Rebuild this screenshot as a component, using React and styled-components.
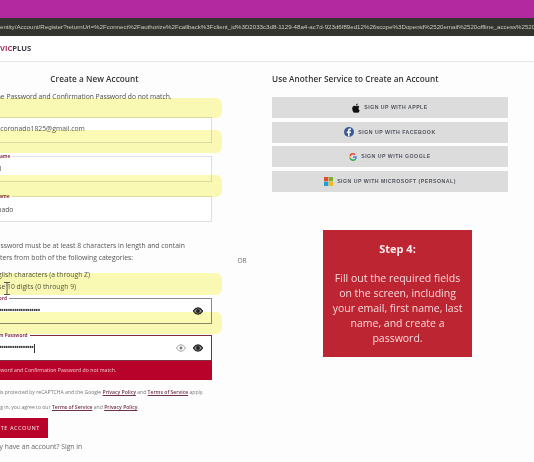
import React from 'react';
import styled, { createGlobalStyle } from 'styled-components';

const Global = createGlobalStyle`
  html, body { margin: 0; padding: 0; background: #fdfdfd; }
  body { width: 534px; height: 462px; overflow: hidden; font-family: "Open Sans", "Liberation Sans", sans-serif; }
`;
const Page = styled.div`
  width: 534px; height: 462px; overflow: hidden; position: relative; background: #fdfdfd;
  display: flex; flex-direction: column; filter: blur(0.45px);
`;
const TopBand = styled.div`height: 18px; background: #b32aa0; flex: none;`;
const UrlBar = styled.div`
  height: 18px; background: #33332f; flex: none; color: #c9cdbd; font-size: 6.15px; line-height: 18px;
  white-space: nowrap; overflow: hidden; font-family: "Liberation Sans", sans-serif;
`;
const Header = styled.div`
  height: 25px; flex: none; border-bottom: 1px solid #e6e6e6; background: #fff;
  font: 700 7.6px/25px "Open Sans", sans-serif; color: #3c3c44;
`;
const Vic = styled.span`color: #a8325e;`;
const Main = styled.div`
  flex: 1; display: flex; align-items: flex-start; margin-left: -29px; padding-top: 10px;
`;
const Left = styled.div`width: 241px; flex: none; display: flex; flex-direction: column; color: #444;`;
const Title = styled.h2`
  margin: 0; font: 600 8.2px/14px "Open Sans", sans-serif; color: #333; text-align: ${p => p.$align || 'center'};
  padding-left: ${p => p.$pad || 0}px; letter-spacing: .05px;
`;
const Alert = styled.div`font-size: 6.75px; line-height: 12px; margin-top: 5px; margin-left: 22px; color: #4c4c4c; white-space: nowrap;`;
const Field = styled.div`
  height: ${p => p.$h || 26}px; box-sizing: border-box; margin-top: ${p => p.$mt}px;
  border: 1px solid ${p => p.$bc || '#dfdfdf'}; background: #fff; position: relative;
  display: flex; align-items: center; padding: 0 8px ${p => p.$lift || 0}px 10px; gap: 7px;
  font-size: 6.8px; color: #555;
`;
const FieldLabel = styled.span`
  position: absolute; left: 10px; top: -4px; background: #fff; font-size: 4.8px; line-height: 6px; font-weight: 700; color: #8b3b50; padding: 0 2px; white-space: nowrap;
`;
const Value = styled.span`flex: 1; white-space: nowrap;`;
const Dots = styled.span`flex: 1; font-size: 6.5px; letter-spacing: -0.3px; color: #3a3a3a; white-space: nowrap; line-height: 10px; font-weight: 700;`;
const Caret = styled.span`display: inline-block; width: 1px; height: 9px; background: #333; margin-left: 1px; vertical-align: middle;`;
const Rules = styled.p`margin: ${p => p.$mt}px 0 0 ${p => p.$ml || 8}px; font-size: 6.8px; line-height: 11.5px; color: #555; white-space: nowrap;`;
const ErrorBar = styled.div`
  height: 19px; background: #b8022a; color: #f3c9cf; font-size: 5.2px; line-height: 19px; padding-left: 8px; white-space: nowrap;
`;
const Fine = styled.p`margin: ${p => p.$mt}px 0 0 8px; font-size: 5.1px; line-height: 8px; color: #777; white-space: nowrap;`;
const A = styled.a`color: #6d3243; text-decoration: underline; font-weight: 600;`;
const Submit = styled.div`
  margin: 7px 0 0 8px; width: 69px; height: 20px; background: #b8022a; color: #f1c8cf; text-align: right; box-sizing: border-box;
  font: 600 5.4px/20px "Open Sans", sans-serif; letter-spacing: .6px; padding-right: 8px; white-space: nowrap;
`;
const SignIn = styled.p`margin: 4px 0 0 8px; font-size: 6.8px; line-height: 10px; color: #666; white-space: nowrap;`;
const Or = styled.div`width: 60px; flex: none; text-align: center; font-size: 6.6px; color: #666; margin-top: 184px;`;
const Right = styled.div`width: 236px; flex: none; display: flex; flex-direction: column;`;
const Social = styled.div`
  height: 21px; margin-top: ${p => p.$mt || 3.67}px; background: #dcdcdc; display: flex; align-items: center; justify-content: center; gap: ${p => p.$gap || 4}px;
  font: 700 5.2px/21px "Liberation Sans", sans-serif; letter-spacing: .5px; color: #50545c; white-space: nowrap;
`;
const Card = styled.div`
  width: 149px; height: 127px; margin: 38px 0 0 51px; background: #bd2532; color: #f6d8da; box-sizing: border-box; text-align: center;
  font: 400 10.5px/15px "Open Sans", sans-serif; padding-top: 12px;
`;
const StepTitle = styled.div`font-weight: 700; font-size: 11px; line-height: 14px; margin-bottom: 15px; color: #fbeaea;`;
const Highlight = styled.div`
  position: absolute; left: -10px; width: 232px; top: ${p => p.$t}px; height: ${p => p.$h}px; background: #fbfbb6; mix-blend-mode: multiply; border-radius: 6px;
`;
const Cursor = styled.svg`position: absolute; left: 4px; top: 282px;`;

const Eye = ({ off, color = '#222' }) => (
  <svg width="10" height="8" viewBox="0 0 22 16" fill="none">
    <path d="M1 8c3-4.500 6.500-7 10-7s7 2.500 10 7c-3 4.500-6.500 7-10 7S4 12.500 1 8Z" stroke={color} strokeWidth={off ? 1.6 : 2.6} fill={off ? 'none' : '#999'} />
    <circle cx="11" cy="8" r={off ? 3.2 : 4.2} fill={color} />
  </svg>
);
const Apple = () => (
  <svg width="8" height="10" viewBox="0 0 16 20"><path fill="#111" d="M13 10.500c0-2 1.700-3 1.800-3.100C13.700 6 12 5.600 11.400 5.600 10 5.500 8.800 6.400 8.100 6.400S6.300 5.600 5.100 5.600C3.500 5.700 2 6.500 1.200 8c-1.600 2.900-.4 7.100 1.200 9.400.8 1.100 1.700 2.400 2.900 2.300 1.200 0 1.600-.7 3-.7s1.800.7 3 .7 2-1.100 2.800-2.300c.9-1.300 1.200-2.500 1.300-2.600-.1 0-2.400-.9-2.400-4.300ZM10.800 3.700C11.400 2.900 11.800 1.900 11.700.9c-.9 0-2 .6-2.600 1.300-.6.700-1.100 1.700-.9 2.700 1 .1 2-.5 2.600-1.200Z" /></svg>
);
const Facebook = () => (
  <svg width="10" height="10" viewBox="0 0 20 20"><circle cx="10" cy="10" r="10" fill="#3b5a9a" /><path fill="#fff" d="M11 19v-7h2.600l.4-3h-3V7.200c0-.9.300-1.400 1.500-1.400H14V3.200c-.3 0-1.200-.1-2.200-.1-2.200 0-3.800 1.300-3.800 3.800V9H5.500v3H8v7Z" /></svg>
);
const Google = () => (
  <svg width="8" height="8" viewBox="0 0 48 48">
    <path fill="#ea4335" d="M24 9.500c3.500 0 6.700 1.300 9.200 3.600l6.800-6.800C35.900 2.500 30.400 0 24 0 14.600 0 6.500 5.400 2.600 13.200l8 6.200C12.400 13.700 17.700 9.500 24 9.500Z" />
    <path fill="#4285f4" d="M47 24.500c0-1.600-.1-3.100-.4-4.500H24v9h12.900c-.6 3-2.200 5.500-4.700 7.200l7.300 5.700C43.800 37.900 47 31.800 47 24.500Z" />
    <path fill="#fbbc05" d="M10.600 28.600a14.500 14.500 0 0 1 0-9.200l-8-6.200a24 24 0 0 0 0 21.600Z" />
    <path fill="#34a853" d="M24 48c6.500 0 11.900-2.100 15.900-5.800l-7.300-5.700c-2.200 1.500-5 2.300-8.600 2.300-6.300 0-11.600-4.200-13.400-9.900l-8 6.200C6.500 42.600 14.600 48 24 48Z" />
  </svg>
);
const Microsoft = () => (
  <svg width="9" height="9" viewBox="0 0 20 20">
    <rect width="9.500" height="9.500" fill="#e2502a" /><rect x="10.500" width="9.500" height="9.500" fill="#7fb02a" />
    <rect y="10.500" width="9.500" height="9.500" fill="#1f9fd8" /><rect x="10.500" y="10.500" width="9.500" height="9.500" fill="#f5bb1d" />
  </svg>
);

export default function App() {
  return (
    <Page>
      <Global />
      <TopBand />
      <UrlBar>entity/Account/Register?returnUrl=%2Fconnect%2Fauthorize%2Fcallback%3Fclient_id%3D2033c3d8-1129-48a4-ac7d-923d6f89ed12%26scope%3Dopenid%2520email%2520offline_access%2520</UrlBar>
      <Header><Vic>VIC</Vic>PLUS</Header>
      <Main>
        <Left>
          <Title $pad={6}>Create a New Account</Title>
          <Alert>The Password and Confirmation Password do not match.</Alert>
          <Field $mt={14} $lift={3}><Value>rafaelcoronado1825@gmail.com</Value></Field>
          <Field $mt={13} $lift={2}><FieldLabel>First Name</FieldLabel><Value>Rafael</Value></Field>
          <Field $mt={14}><FieldLabel>Last Name</FieldLabel><Value>Coronado</Value></Field>
          <Rules $mt={18}>The password must be at least 8 characters in length and contain<br />characters from both of the following categories:</Rules>
          <Rules $mt={6} $ml={19}>English characters (a through Z)<br />Base 10 digits (0 through 9)</Rules>
          <Field $mt={6} $bc="#8a8a8a"><FieldLabel>Password</FieldLabel><Dots>•••••••••••••••••••••••••••</Dots><Eye /></Field>
          <Field $mt={11} $bc="#7d2f3f"><FieldLabel>Confirm Password</FieldLabel><Dots>••••••••••••••••••••••••<Caret /></Dots><Eye off color="#777" /><Eye /></Field>
          <ErrorBar>The Password and Confirmation Password do not match.</ErrorBar>
          <Fine $mt={8}>This site is protected by reCAPTCHA and the Google <A>Privacy Policy</A> and <A>Terms of Service</A> apply.</Fine>
          <Fine $mt={7}>By signing in, you agree to our <A>Terms of Service</A> and <A>Privacy Policy</A>.</Fine>
          <Submit>CREATE ACCOUNT</Submit>
          <SignIn>Already have an account? Sign in</SignIn>
        </Left>
        <Or>OR</Or>
        <Right>
          <Title $align="left">Use Another Service to Create an Account</Title>
          <Social $mt={11}><Apple />SIGN UP WITH APPLE</Social>
          <Social><Facebook />SIGN UP WITH FACEBOOK</Social>
          <Social><Google />SIGN UP WITH GOOGLE</Social>
          <Social><Microsoft />SIGN UP WITH MICROSOFT (PERSONAL)</Social>
          <Card>
            <StepTitle>Step 4:</StepTitle>
            Fill out the required fields<br />on the screen, including<br />your email, first name, last<br />name, and create a<br />password.
          </Card>
        </Right>
      </Main>
      <Highlight $t={98} $h={20} />
      <Highlight $t={130} $h={23} />
      <Highlight $t={175} $h={22} />
      <Highlight $t={273} $h={22} />
      <Highlight $t={312} $h={22} />
      <Cursor width="6" height="13" viewBox="0 0 6 13" fill="none" stroke="#555" strokeWidth="1">
        <path d="M0 .5h6M0 12.500h6M3 .5v12" />
      </Cursor>
    </Page>
  );
}
